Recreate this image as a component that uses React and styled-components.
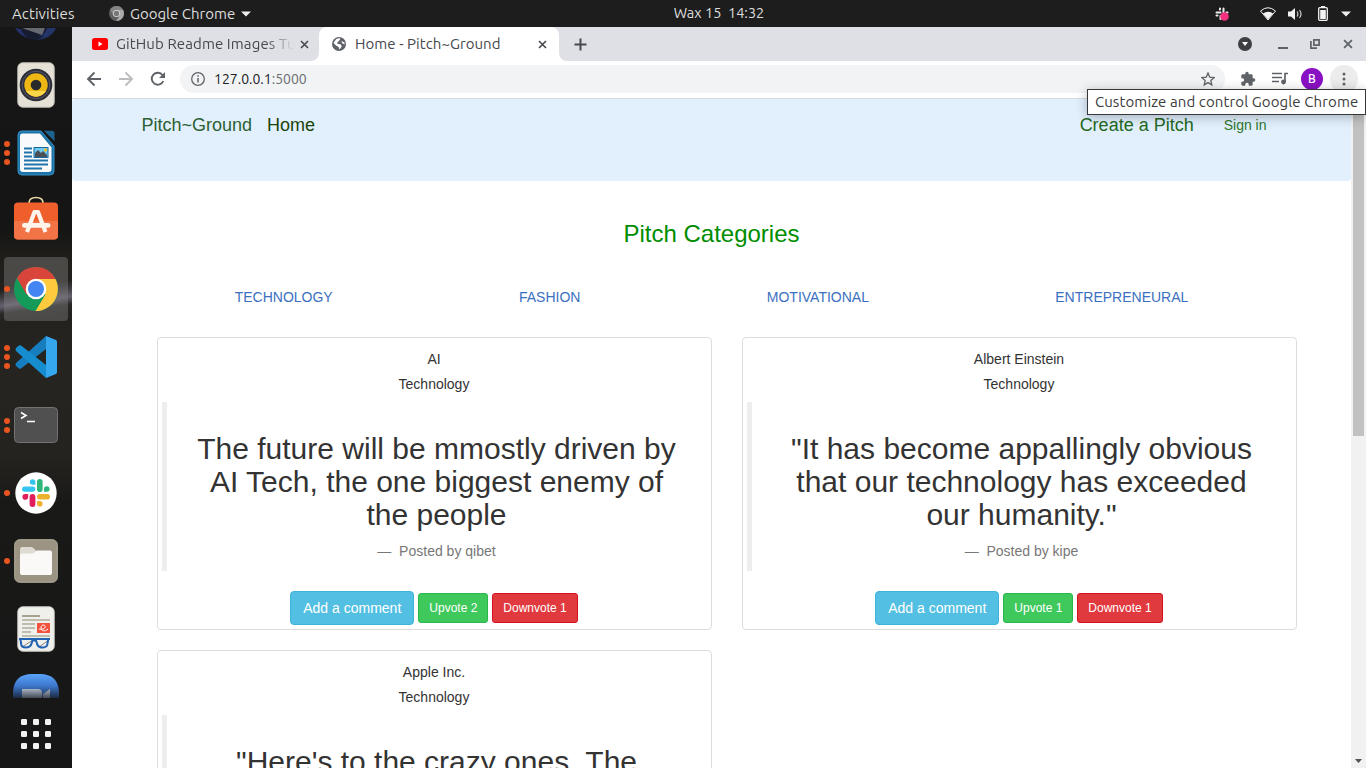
import React from 'react';
import styled, { createGlobalStyle } from 'styled-components';

const ui = '"Ubuntu", "Noto Sans", sans-serif';
const web = '"Liberation Sans", Arial, sans-serif';

const Global = createGlobalStyle`
  *, *::before, *::after { box-sizing: border-box; }
  body { margin: 0; overflow: hidden; background: #fff; }
  h1, h2, h5 { margin: 0; font-weight: 400; }
  svg { display: block; flex: none; }
`;

const Desktop = styled.div`
  width: 1366px; height: 768px; display: flex; flex-direction: column;
  overflow: hidden; position: relative; font-family: ${ui};
`;
const Label = styled.span`
  display: block;
  font-size: ${p => p.$size || 15}px;
  line-height: 20px;
  padding-bottom: ${p => p.$lift || 0}px;
  letter-spacing: ${p => p.$track || 0}px;
  white-space: pre;
`;
const TopBar = styled.header`
  height: 27px; flex: none; background: #1d1d1d; color: #dedede;
  display: grid; grid-template-columns: 1fr auto 1fr; align-items: center;
`;
const TopLeft = styled.div`display: flex; align-items: center; padding-left: 12px;`;
const ActivitiesButton = styled.div`width: 97px;`;
const AppMenu = styled.div`display: flex; align-items: center; gap: 6px;`;
const TopRight = styled.div`display: flex; align-items: center; justify-content: flex-end; padding-right: 15px;`;
const Clock = styled.div`padding-left: 72px;`;
const Body = styled.div`display: flex; flex: 1; min-height: 0;`;

const Dock = styled.nav`
  width: 72px; flex: none; overflow: hidden;
  display: flex; flex-direction: column;
  background:
    linear-gradient(172deg, transparent 39%, #3d3a3e 40%, #66616e 41.2%, #292827 42.2%, transparent 43.6%) no-repeat 0 -30px,
    linear-gradient(180deg, #151615 0, #141514 27%, #211f1b 32%, #262421 45%, #25231f 58%, #191918 64%, #161616 100%);
`;
const DockItem = styled.div`
  height: ${p => p.$height || 68}px; flex: none; overflow: hidden;
  display: flex; align-items: ${p => p.$align || 'center'};
`;
const Dots = styled.div`
  width: 4px; flex: none; padding-left: 4px; display: flex; flex-direction: column; gap: 3px;
  position: relative; z-index: 1;
`;
const Dot = styled.i`width: 6px; height: 6px; border-radius: 50%; background: #e95420;`;
const Tile = styled.div`
  width: 64px; height: 64px; border-radius: 4px; display: flex; align-items: ${p => p.$align || 'center'};
  justify-content: center; background: ${p => (p.$active ? 'rgba(130,130,130,.42)' : 'transparent')};
  padding-bottom: ${p => p.$raise || 0}px;
`;

const Browser = styled.main`flex: 1; display: flex; flex-direction: column; min-width: 0; background: #fff;`;
const TabStrip = styled.div`height: 34px; flex: none; display: flex; background: #fff; color: #45484c;`;
const Tab = styled.div`
  display: flex; align-items: center; height: 34px;
  width: ${p => p.$width}px; padding: 0 ${p => p.$right}px 0 ${p => p.$left}px;
  background: ${p => (p.$active ? '#fff' : '#dee0e6')};
  border-radius: ${p => (p.$active ? '8px 8px 0 0' : '0 0 8px 0')};
`;
const TabBacking = styled.div`background: linear-gradient(#dee0e6 0 50%, #fff 50%);`;
const ActiveBacking = styled.div`background: #dee0e6;`;
const TabTitle = styled(Label)`
  flex: 1; min-width: 0; overflow: hidden; margin-left: ${p => p.$gap || 8}px;
  ${p => p.$fade && 'mask-image: linear-gradient(90deg, #000 150px, transparent 178px);'}
`;
const StripRest = styled.div`
  flex: 1; display: flex; align-items: center; background: #dee0e6; border-radius: 0 0 0 8px; padding: 0 13px 0 15px;
`;
const WindowButtons = styled.div`margin-left: auto; display: flex; align-items: center;`;
const Toolbar = styled.div`
  height: 38px; flex: none; display: flex; align-items: center; padding: 0 8px 2px 14px;
  border-bottom: 1px solid #d9d9e0; background: #fff;
`;
const NavIcons = styled.div`display: flex; gap: 16px; align-items: center; margin-right: 14px;`;
const Address = styled.div`
  width: 1046px; height: 28px; border-radius: 14px; background: #f1f3f4; display: flex; align-items: center;
  padding: 0 10px; color: #202124;
`;
const Muted = styled.span`color: #6a6d72;`;
const AddressText = styled(Label)`flex: 1; margin-left: 8px;`;
const Actions = styled.div`display: flex; align-items: center; margin-left: 14px;`;
const Avatar = styled.div`
  width: 22px; height: 22px; border-radius: 50%; background: #8a10c4; color: #fff; margin-left: 12px;
  display: grid; place-items: center; font-size: 12px; font-weight: 500;
`;
const MenuButton = styled.div`
  width: 28px; height: 28px; border-radius: 50%; background: #ececec; margin-left: 7px;
  display: grid; place-items: center;
`;
const Tooltip = styled.div`
  position: absolute; left: 1087px; top: 89px; width: 279px; height: 26px; background: #fff; color: #3c3c3c;
  border: 1px solid #36373a; box-shadow: 0 2px 12px rgba(0,0,0,.28);
  display: flex; align-items: center; padding-left: 7px; z-index: 5;
`;

const Viewport = styled.div`flex: 1; display: flex; min-height: 0;`;
const Page = styled.div`
  flex: 1; min-width: 0; overflow: hidden; font: 14px/20px ${web}; color: #333;
`;
const Scrollbar = styled.div`
  width: 15px; background: #f1f1f1; display: flex; flex-direction: column; align-items: center;
`;
const Thumb = styled.div`width: 11px; height: 337px; background: #c1c1c1;`;
const ArrowBox = styled.div`margin-top: auto; height: 15px; display: grid; place-items: center;`;
const Navbar = styled.div`
  height: 82px; background: #e2f0fe; border-radius: 4px; padding: 16px 84.5px 0 69.5px;
  display: flex; align-items: flex-start;
`;
const NavLink = styled.a`
  font-size: ${p => (p.$small ? 14 : 18)}px; line-height: 20px; color: ${p => p.$color};
  margin-left: ${p => p.$gap || 0}px;
`;
const NavRight = styled.div`margin-left: auto; display: flex;`;
const Heading = styled.h1`
  font-size: 24px; line-height: 26px; color: #008d00; text-align: center; margin-top: 40px;
`;
const Categories = styled.div`
  display: flex; justify-content: space-around; width: 1140px; margin: 40px auto 0; color: #3b70c0;
`;
const CardGrid = styled.div`
  display: grid; grid-template-columns: 555px 555px; gap: 20px 30px; margin: 30px 0 0 84.5px;
`;
const Card = styled.article`
  border: 1px solid #ddd; border-radius: 4px; padding: 4px; height: 293px; text-align: center;
`;
const CardLine = styled.h5`font-size: 14px; line-height: 15px; margin: 10px 0;`;
const Quote = styled.blockquote`
  margin: 0 0 20px; padding: 10px 20px; border-left: 5px solid #eee; min-height: 169px;
`;
const QuoteText = styled.h2`font-size: 30px; line-height: 33px; margin: 20px 0 10px;`;
const Author = styled.footer`color: #777; white-space: pre;`;
const ButtonRow = styled.div`display: flex; justify-content: center; align-items: center; gap: 4px;`;
const Button = styled.button`
  font: ${p => (p.$large ? '14px/20px' : '12px/18px')} ${web};
  padding: ${p => (p.$large ? '6px 12px' : '5px 10px')};
  border: 1px solid ${p => p.$border}; border-radius: ${p => (p.$large ? 4 : 3)}px;
  background: ${p => p.$bg}; color: #fff; white-space: nowrap;
`;

const Icon = styled.svg`margin-left: ${p => p.$before || 0}px; margin-right: ${p => p.$after || 0}px;`;
const S = ({ w, h = w, vb, children, before, after }) => (
  <Icon width={w} height={h} viewBox={vb || `0 0 ${w} ${h}`} fill="none" $before={before} $after={after}>{children}</Icon>
);
const Caret = () => <S w={10} h={6}><path d="M0 .5h10L5 5.5z" fill="#eee" /></S>;
const Cross = ({ size = 9, color = '#45484c' }) => (
  <S w={size} vb="0 0 9 9"><path d="M1 1l7 7M8 1L1 8" stroke={color} strokeWidth="1.6" /></S>
);
const slackParts = (
  <>
    <g fill="#36c5f0"><rect x="0" y="7.4" width="13.4" height="5.4" rx="2.7" /><path d="M7.8 3a2.8 2.8 0 1 1 5.6 0v2.8h-2.8A2.8 2.8 0 0 1 7.8 3z" /></g>
    <g fill="#2eb67d"><rect x="15" y="0" width="5.6" height="13" rx="2.8" /><path d="M22 12.8V10a2.8 2.8 0 1 1 2.8 2.8z" /></g>
    <g fill="#ecb22e"><rect x="15" y="15" width="13" height="5.6" rx="2.8" /><path d="M15 22h2.8a2.8 2.8 0 1 1-2.8 2.8z" /></g>
    <g fill="#e01e5a"><rect x="7.6" y="15" width="5.8" height="13" rx="2.9" /><path d="M6.2 15v2.8A2.9 2.9 0 1 1 3.2 15z" /></g>
  </>
);

const Thunderbird = () => (
  <S w={44} h={14}>
    <path d="M2 2C6 9 13 13 22 13S39 9 42 1z" fill="#171c31" />
    <path d="M8 1l20 7 3-7z" fill="#686a72" /><path d="M33 1h9c-3 7-9 11-20 12 4-1 6-2 8-5-2 1-3 1-5 1 5-2 7-4 8-8z" fill="#233568" />
    <path d="M1 1c3 5 7 8 12 9-3-2-5-5-6-8z" fill="#25306a" />
  </S>
);
const Speaker = () => (
  <S w={38} h={46}>
    <rect x=".8" y=".8" width="36.4" height="44.4" rx="5" fill="#e5e1d7" stroke="#c6c2b9" />
    <circle cx="19" cy="23" r="16.3" fill="#2d2e38" /><circle cx="19" cy="23" r="13.8" stroke="#575869" />
    <circle cx="19" cy="23" r="11.7" fill="#edb814" /><path d="M9 29a11.7 11.7 0 0 0 20 0z" fill="#f7d64a" />
    <circle cx="19" cy="23" r="5.3" fill="#292a2c" />
  </S>
);
const Writer = () => (
  <S w={38} h={46}>
    <path d="M5 1h19l13 15v25q0 4-4 4H5q-4 0-4-4V5q0-4 4-4z" fill="#1c74a8" stroke="#3791c5" />
    <path d="M5 3.500h18l11.500 14v21.500q0 3-3 3H6q-3 0-3-3V6q0-2.500 2-2.500z" fill="#f9fafb" />
    <path d="M27 .800h8q2.500 0 2.500 2.500v8z" fill="#1c638f" />
    <path d="M7 18.500h8M7 22.500h8M7 26.500h8M7 30.500h24M7 34.500h24M7 38.500h18" stroke="#1f75a9" strokeWidth="2" />
    <rect x="17" y="17.500" width="14" height="10" fill="#6ec9f3" stroke="#17689a" />
    <path d="M18 27v-4l3-3 3 3 2-2 4 4v2z" fill="#4a5156" /><circle cx="28.500" cy="20" r="1.700" fill="#e7c135" />
  </S>
);
const Software = () => (
  <S w={44} h={44}>
    <path d="M15 9V7q0-5.500 7-5.500T29 7v2" stroke="#e6d9a8" strokeWidth="1.700" />
    <rect x="0" y="6.500" width="44" height="37" rx="4" fill="#ee5f2c" /><path d="M0 25h44v14.500q0 4-4 4H4q-4 0-4-4z" fill="#f27346" />
    <path d="M13 36l7.500-20h3.500l7.500 20" stroke="#fff4ec" strokeWidth="4.200" strokeLinejoin="round" />
    <rect x="8" y="27" width="28.500" height="4.800" rx="2.400" fill="#fff4ec" />
  </S>
);
const Chrome = ({ size = 44, mono }) => (
  <S w={size} vb="0 0 44 44">
    <circle cx="22" cy="22" r="22" fill={mono ? '#606060' : '#149b5a'} />
    <path d="M2.950 11A22 22 0 0 1 41.500 12H22V22L12.500 27.500z" fill={mono ? '#858585' : '#d9453b'} />
    <path d="M41.500 12A22 22 0 0 1 21.500 44L31.500 27.500 22 22V12z" fill={mono ? '#aaa' : '#ffca3e'} />
    <circle cx="22" cy="22" r="10.300" fill={mono ? '#ddd' : '#fff'} /><circle cx="22" cy="22" r="8" fill={mono ? '#777' : '#4385f3'} />
  </S>
);
const Code = () => (
  <S w={42} h={42}>
    <path d="M31 0L1 27q-1 1.500 0 3l3 2.500q1 .700 2 0L31 13z" fill="#167dbf" />
    <path d="M31 42L1 15q-1-1.500 0-3l3-2.500q1-.700 2 0L31 29z" fill="#158dcf" />
    <path d="M31 0l10 4q1 .500 1 2v30q0 1.500-1 2l-10 4z" fill="#35a7ee" />
  </S>
);
const Terminal = () => (
  <S w={44} h={36}>
    <rect x=".500" y=".500" width="43" height="35" rx="4" fill="#505050" stroke="#737373" />
    <path d="M7 5.500l5 3-5 3M13 14.500h8" stroke="#fff" strokeWidth="1.600" />
  </S>
);
const Slack = () => (
  <S w={42}><circle cx="21" cy="21" r="20.700" fill="#fff" /><g transform="translate(7 7)">{slackParts}</g></S>
);
const Files = () => (
  <S w={44}>
    <rect x=".700" y=".700" width="42.600" height="42.600" rx="5" fill="#9b9482" stroke="#b3ad9c" />
    <path d="M6 11q0-3 2-3h10l4 3.500V17H6z" fill="#dedbd2" />
    <path d="M6 16.500q0-2 2-2h11l4-3h13q2 0 2 2V34q0 2-2 2H8q-2 0-2-2z" fill="#faf9f7" />
  </S>
);
const Reader = () => (
  <S w={38} h={46}>
    <rect x=".800" y=".800" width="36.400" height="44.400" rx="5" fill="#efefeb" stroke="#cfcec9" />
    <path d="M5 10h18" stroke="#a8a290" strokeWidth="2" />
    <path d="M5 14h28M5 18h13M5 22h13M5 26h9M5 30h28" stroke="#c0bcae" strokeWidth="1.800" />
    <rect x="20" y="17" width="13" height="10" fill="#f2533f" /><path d="M22 23c4 1 7-1 6-3s-4-1-4 2 4 4 7 1" stroke="#fff" />
    <path d="M5 41l11-7M22 41l10-7" stroke="#8a8a8a" />
    <path d="M2 33h31M3.500 33.500l.800 5.500q.700 2.500 4.500 2.500t5.200-2.500l1.500-4.500h3.500l1.500 4.500q1.200 2.500 5 2.500t4.700-2.500l1-5.500" stroke="#2263b3" strokeWidth="2" />
  </S>
);
const Zoom = () => (
  <S w={46} h={24}>
    <defs><linearGradient id="z" x2="0" y2="1"><stop stopColor="#5ba3fa" /><stop offset=".5" stopColor="#3d77cb" /><stop offset="1" stopColor="#1c2940" /></linearGradient>
      <linearGradient id="c" x2="0" y2="1"><stop stopColor="#a8b2c3" /><stop offset="1" stopColor="#424854" /></linearGradient></defs>
    <path d="M0 24v-6Q1 0 19 0h8q18 0 19 18v6z" fill="url(#z)" />
    <path d="M9 24v-9h16q4 0 4 4v5zM30 20l7-5v9h-7z" fill="url(#c)" />
  </S>
);
const Grid = () => (
  <S w={30}>
    {[0, 12, 24].map(y => [0, 12, 24].map(x => <rect key={`${x}-${y}`} x={x} y={y} width="6" height="6" rx="1.300" fill="#f2f2f0" />))}
  </S>
);

const apps = [
  { icon: <Speaker />, dots: 0 }, { icon: <Writer />, dots: 3 }, { icon: <Software />, dots: 0, raise: 7 },
  { icon: <Chrome />, dots: 1, active: true }, { icon: <Code />, dots: 3 }, { icon: <Terminal />, dots: 2 },
  { icon: <Slack />, dots: 1 }, { icon: <Files />, dots: 1 }, { icon: <Reader />, dots: 0 },
];

const pitches = [
  { title: 'AI', text: 'The future will be mmostly driven by AI Tech, the one biggest enemy of the people', author: 'qibet', up: 2, down: 1 },
  { title: 'Albert Einstein', text: '"It has become appallingly obvious that our technology has exceeded our humanity."', author: 'kipe', up: 1, down: 1 },
  { title: 'Apple Inc.', text: '"Here\'s to the crazy ones. The' },
];

const Status = () => (
  <TopRight>
    <S w={14} after={31}>
      <g stroke="#eee" strokeWidth="2" strokeLinecap="round"><path d="M1.500 5.500h4M5 1.500v1M8.500 1.500v4M11.500 5.500h1M1.500 8.500h1M5.500 9v3" /></g>
      <circle cx="9.500" cy="9.500" r="4.300" fill="#f5317f" />
    </S>
    <S w={16} h={14} after={12}>
      <path d="M.500 4Q8-2.500 15.500 4L8 13z" stroke="#f2f2f2" /><path d="M3 6.500q5-3.500 10 0l-5 6z" fill="#f2f2f2" />
    </S>
    <S w={15} h={14} after={15}>
      <path d="M0 4.500h3L7 1v12L3 9.500H0z" fill="#f2f2f2" /><path d="M9 4.500q1.800 2.500 0 5M11.500 3q3 4 0 8" stroke="#ccc" strokeWidth="1.200" />
    </S>
    <S w={10} h={15} after={13}>
      <path d="M3 0h4v2H3z" fill="#f2f2f2" /><rect x=".700" y="1.700" width="8.600" height="12.600" rx="1" stroke="#f2f2f2" strokeWidth="1.300" /><path d="M2.200 4h5.600v9H2.200z" fill="#f2f2f2" />
    </S>
    <Caret />
  </TopRight>
);

export default function App() {
  return (
    <Desktop>
      <Global />
      <TopBar>
        <TopLeft>
          <ActivitiesButton><Label $track={0.1}>Activities</Label></ActivitiesButton>
          <AppMenu><Chrome size={15} mono /><Label>Google Chrome</Label><Caret /></AppMenu>
        </TopLeft>
        <Clock><Label $size={14.5} $lift={2}>Wax 15  14:32</Label></Clock>
        <Status />
      </TopBar>
      <Body>
        <Dock>
          <DockItem $height={24} $align="flex-start"><Dots /><Tile $align="flex-start"><Thunderbird /></Tile></DockItem>
          {apps.map((a, i) => (
            <DockItem key={i}>
              <Dots>{Array.from({ length: a.dots }, (_, n) => <Dot key={n} />)}</Dots>
              <Tile $active={a.active} $raise={a.raise}>{a.icon}</Tile>
            </DockItem>
          ))}
          <DockItem $height={35} $align="flex-end"><Dots /><Tile $align="flex-end"><Zoom /></Tile></DockItem>
          <DockItem $height={72}><Dots /><Tile><Grid /></Tile></DockItem>
        </Dock>
        <Browser>
          <TabStrip>
            <TabBacking>
              <Tab $width={247} $left={20} $right={10}>
                <S w={16} h={12}><rect width="16" height="12" rx="2.500" fill="#f00" /><path d="M6.500 3.500v5l4-2.500z" fill="#fff" /></S>
                <TabTitle $fade $track={0.1}>GitHub Readme Images Tu</TabTitle><Cross />
              </Tab>
            </TabBacking>
            <ActiveBacking>
              <Tab $active $width={240} $left={13} $right={12}>
                <S w={14}><circle cx="7" cy="7" r="7" fill="#5f6368" /><path d="M4 2.200q3-1.700 4.500-.7L7 4 5.500 5v2l3 .3 1.300 2-2 3q-1.300-.2-1-2.300L4 8.500 1.500 6zM9.500 4l3 1.500v2L10 6z" fill="#fff" /></S>
                <TabTitle $gap={9} $track={0.06}>Home - Pitch~Ground</TabTitle><Cross />
              </Tab>
            </ActiveBacking>
            <StripRest>
              <S w={13}><path d="M6.500 .500v12M.500 6.500h12" stroke="#45484c" strokeWidth="2" /></S>
              <WindowButtons>
                <S w={14} after={26}><circle cx="7" cy="7" r="7" fill="#3c4043" /><path d="M4 5h6L7 9z" fill="#fff" /></S>
                <S w={10} after={22}><path d="M0 9h10" stroke="#5f6368" strokeWidth="2" /></S>
                <S w={10} after={23}><path d="M3.900.900h5.200v5.200H3.900zM.900 2v7.100H7" stroke="#5f6368" strokeWidth="1.700" /></S>
                <Cross size={10} color="#5f6368" />
              </WindowButtons>
            </StripRest>
          </TabStrip>
          <Toolbar>
            <NavIcons>
              <S w={16}><path d="M15 8H2M8.500 1.500L2 8l6.500 6.500" stroke="#5f6368" strokeWidth="1.900" /></S>
              <S w={16}><path d="M1 8h13M7.500 1.500L14 8l-6.500 6.500" stroke="#bbbdc0" strokeWidth="1.900" /></S>
              <S w={16}><path d="M13.300 10A6 6 0 1 1 12.600 4.200" stroke="#5f6368" strokeWidth="1.900" /><path d="M15 1v6H9z" fill="#5f6368" /></S>
            </NavIcons>
            <Address>
              <S w={16}><circle cx="8" cy="8" r="6.300" stroke="#5f6368" strokeWidth="1.300" /><path d="M8 7v4.500M8 4.300v1.500" stroke="#5f6368" strokeWidth="1.500" /></S>
              <AddressText $size={14}>127.0.0.1<Muted>:5000</Muted></AddressText>
              <S w={14} vb="1 1 14 14"><path d="M8 2l1.700 4.100 4.500.4-3.400 3 1 4.400L8 11.600l-3.800 2.300 1-4.400-3.400-3 4.500-.4z" stroke="#5f6368" strokeWidth="1.300" /></S>
            </Address>
            <Actions>
              <S w={16} before={1} vb="0 0 24 24"><path d="M20.500 11H19V7c0-1.100-.9-2-2-2h-4V3.500a2.500 2.500 0 0 0-5 0V5H4c-1.100 0-2 .9-2 2v3.800h1.500a2.700 2.700 0 0 1 0 5.400H2V20c0 1.100.9 2 2 2h3.800v-1.500a2.700 2.700 0 0 1 5.400 0V22H17c1.100 0 2-.9 2-2v-4h1.500a2.500 2.500 0 0 0 0-5z" fill="#5f6368" /></S>
              <S w={17} h={13} before={16}><path d="M0 1.500h10M0 5.500h10M0 9.500h7M13 10V1.500h3" stroke="#5f6368" strokeWidth="1.700" /><circle cx="11.500" cy="10" r="2.400" fill="#5f6368" /></S>
              <Avatar>B</Avatar>
              <MenuButton><S w={4} h={14}><g fill="#5f6368"><circle cx="2" cy="2" r="1.500" /><circle cx="2" cy="7" r="1.500" /><circle cx="2" cy="12" r="1.500" /></g></S></MenuButton>
            </Actions>
          </Toolbar>
          <Viewport>
            <Page>
              <Navbar>
                <NavLink $color="#2b6032">Pitch~Ground</NavLink>
                <NavLink $color="#1a4508" $gap={15}>Home</NavLink>
                <NavRight>
                  <NavLink $color="#23691f">Create a Pitch</NavLink>
                  <NavLink $small $color="#2f752b" $gap={30}>Sign in</NavLink>
                </NavRight>
              </Navbar>
              <Heading>Pitch Categories</Heading>
              <Categories><a>TECHNOLOGY</a><a>FASHION</a><a>MOTIVATIONAL</a><a>ENTREPRENEURAL</a></Categories>
              <CardGrid>
                {pitches.map(p => (
                  <Card key={p.title}>
                    <CardLine>{p.title}</CardLine>
                    <CardLine>Technology</CardLine>
                    <Quote>
                      <QuoteText>{p.text}</QuoteText>
                      {p.author && <Author>{'—  Posted by ' + p.author}</Author>}
                    </Quote>
                    {p.author && (
                      <ButtonRow>
                        <Button $large $bg="#53bfe2" $border="#3db2da">Add a comment</Button>
                        <Button $bg="#3fc95d" $border="#28b84a">Upvote {p.up}</Button>
                        <Button $bg="#e0393e" $border="#d5101c">Downvote {p.down}</Button>
                      </ButtonRow>
                    )}
                  </Card>
                ))}
              </CardGrid>
            </Page>
            <Scrollbar>
              <Thumb />
              <ArrowBox><S w={7} h={4}><path d="M0 0h7L3.500 4z" fill="#505050" /></S></ArrowBox>
            </Scrollbar>
          </Viewport>
        </Browser>
      </Body>
      <Tooltip><Label $track={0.11}>Customize and control Google Chrome</Label></Tooltip>
    </Desktop>
  );
}
